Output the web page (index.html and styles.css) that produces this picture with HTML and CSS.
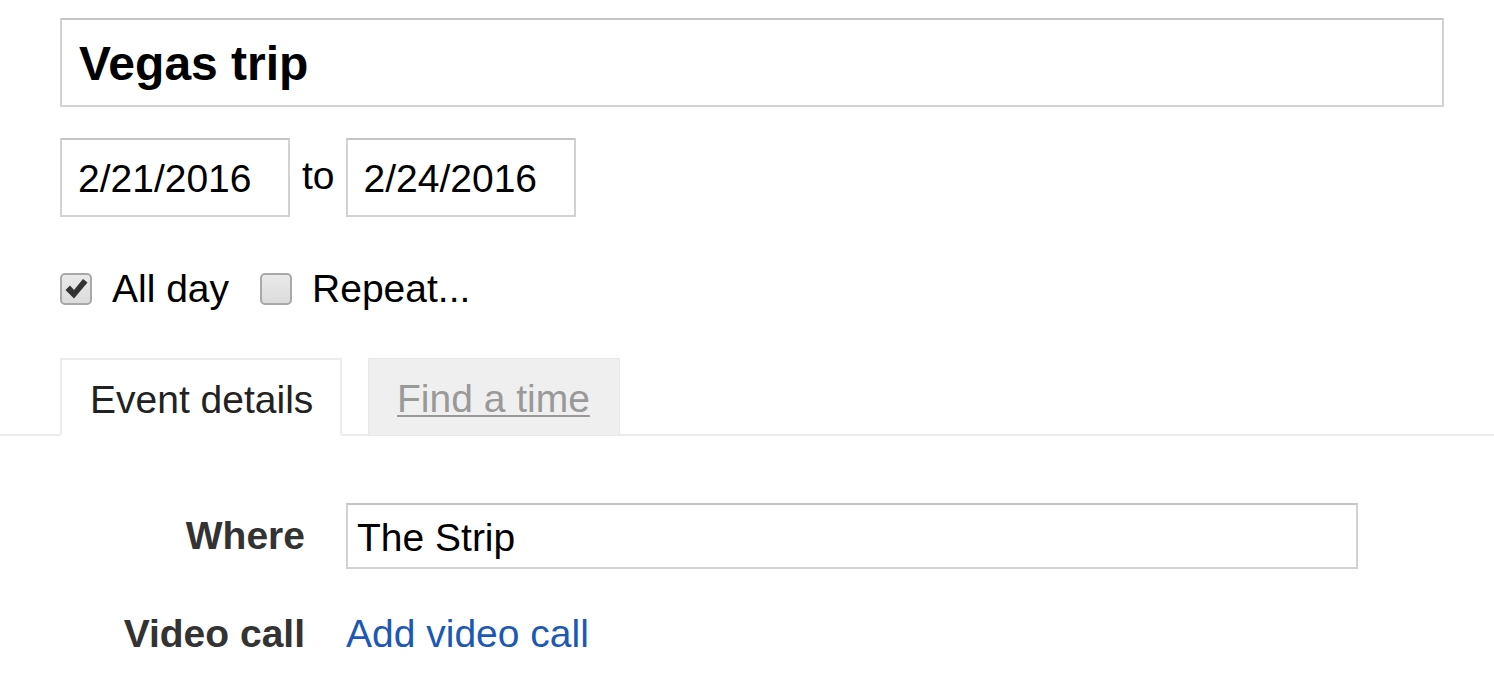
FILE: index.html
```html
<!DOCTYPE html>
<html lang="en">

<head>
  <meta charset="UTF-8">
  <title>Vegas trip</title>
  <link rel="stylesheet" href="styles.css">
</head>

<body>
  <div class="page">
    <div class="title-box">Vegas trip</div>

    <div class="dates">
      <div class="field date">2/21/2016</div>
      <span class="to">to</span>
      <div class="field date">2/24/2016</div>
    </div>

    <div class="checks">
      <label class="check">
        <span class="box checked">
          <svg viewBox="0 0 32 32" width="32" height="32">
            <path d="M5.5 17 L10 12.5 L14 17 L23 6 L27.5 9.5 L14 25.5 Z" fill="#333" />
          </svg>
        </span>
        All day
      </label>
      <label class="check">
        <span class="box"></span>
        Repeat...
      </label>
    </div>
  </div>

  <div class="tabs">
    <div class="tab active">Event details</div>
    <div class="tab inactive"><a href="#">Find a time</a></div>
  </div>

  <div class="details">
    <div class="label">Where</div>
    <div class="field where">The Strip</div>
    <div class="label">Video call</div>
    <a class="link" href="#">Add video call</a>
  </div>
</body>

</html>
```

FILE: styles.css
```css
/* base */
body {
  margin: 0;
  font-family: "Liberation Sans", Arial, sans-serif;
  color: #000;
  background: #fff;
}

.page {
  padding: 18px 50px 0 60px;
}

/* title */
.title-box {
  height: 85px;
  border: 2px solid #d2d2d2;
  border-top-color: #c4c4c4;
  padding-left: 17px;
  font-size: 48px;
  font-weight: bold;
  line-height: 88px;
}

/* date row */
.dates {
  display: flex;
  align-items: center;
  margin-top: 31px;
}

.field {
  border: 2px solid #d2d2d2;
  border-top-color: #c4c4c4;
  font-size: 39px;
  box-sizing: border-box;
}

.date {
  width: 230px;
  height: 79px;
  line-height: 78px;
  padding-left: 16px;
}

.to {
  font-size: 39px;
  margin: 0 11px 4px 12px;
}

/* checkboxes */
.checks {
  display: flex;
  align-items: center;
  margin-top: 55px;
  height: 34px;
}

.check {
  display: flex;
  align-items: center;
  font-size: 39px;
  margin-right: 31px;
}

.box {
  width: 28px;
  height: 28px;
  border: 2px solid #a8a8a8;
  border-radius: 5px;
  background: linear-gradient(#e9e9e9, #dcdcdc);
  margin-right: 20px;
  position: relative;
}

.box svg {
  position: absolute;
  left: -2px;
  top: -2px;
}

/* tabs */
.tabs {
  display: flex;
  align-items: flex-end;
  margin-top: 52px;
  padding-left: 60px;
  border-bottom: 2px solid #ececec;
  height: 76px;
}

.tab {
  height: 78px;
  box-sizing: border-box;
  font-size: 39px;
  line-height: 80px;
  padding: 0 28px;
  margin-bottom: -2px;
  white-space: nowrap;
}

.tab.active {
  width: 282px;
  border: 2px solid #ececec;
  border-bottom: 2px solid #fff;
  background: #fff;
  color: #222;
}

.tab.inactive {
  width: 252px;
  margin-left: 26px;
  background: #efefef;
  border: 1px solid #e8e8e8;
}

.tab.inactive a {
  color: #999;
  text-decoration: underline;
  text-underline-offset: 3px;
  text-decoration-thickness: 2px;
}

/* details form */
.details {
  display: grid;
  grid-template-columns: 245px 1012px;
  column-gap: 41px;
  row-gap: 43px;
  align-items: center;
  padding-left: 60px;
  margin-top: 67px;
}

.label {
  text-align: right;
  font-size: 39px;
  font-weight: bold;
  color: #333;
}

.where {
  height: 66px;
  line-height: 66px;
  padding-left: 9px;
}

.link {
  font-size: 39px;
  color: #1c58b4;
  text-decoration: none;
  justify-self: start;
}
```
